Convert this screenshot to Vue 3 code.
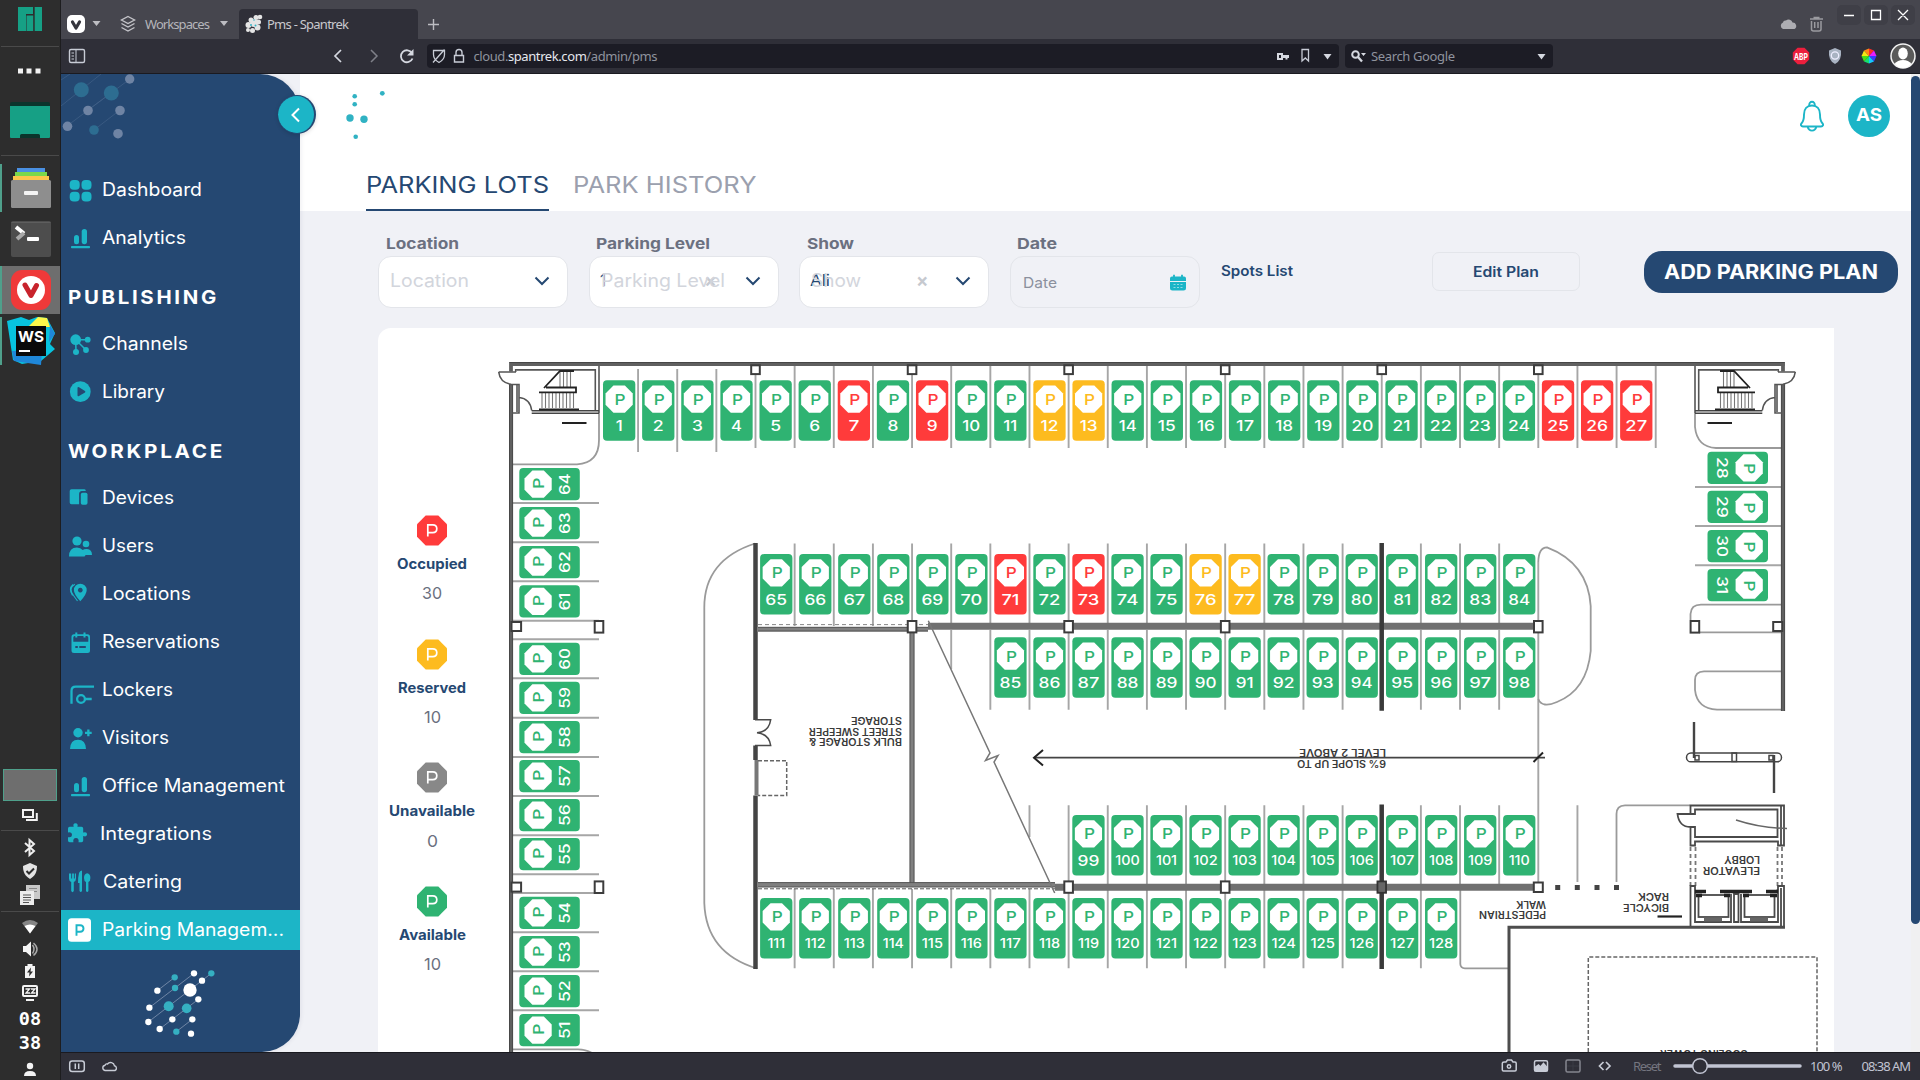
<script setup>
import { h } from 'vue'

// Single line of text fitted to a given width; the box is centred on the capitals.
const FitText = (props) => {
  const size = Number(props.size || 18)
  const height = size * 1.2
  return h('svg', { width: props.w, height, class: 'fit', style: { overflow: 'visible', flex: 'none', display: 'block' } }, [
    h('text', {
      x: 0,
      y: height / 2 + size * 0.364,
      'font-size': size,
      'font-weight': props.weight || 400,
      textLength: props.w,
      lengthAdjust: 'spacingAndGlyphs',
      fill: 'currentColor',
      style: { letterSpacing: props.spacing ? props.spacing + 'px' : null },
    }, props.text),
  ])
}
FitText.props = ['text', 'w', 'size', 'weight', 'spacing']

const menu = [
  { icon: 'dashboard', text: 'Dashboard', w: 100 },
  { icon: 'chart', text: 'Analytics', w: 84 },
  { title: 'PUBLISHING', w: 151 },
  { icon: 'channels', text: 'Channels', w: 86 },
  { icon: 'library', text: 'Library', w: 63 },
  { title: 'WORKPLACE', w: 157 },
  { icon: 'devices', text: 'Devices', w: 72 },
  { icon: 'users', text: 'Users', w: 52 },
  { icon: 'locations', text: 'Locations', w: 89 },
  { icon: 'reservations', text: 'Reservations', w: 118 },
  { icon: 'lockers', text: 'Lockers', w: 71 },
  { icon: 'visitors', text: 'Visitors', w: 67 },
  { icon: 'chart', text: 'Office Management', w: 183 },
  { icon: 'integrations', text: 'Integrations', w: 112, shift: -2 },
  { icon: 'catering', text: 'Catering', w: 79, shift: 1 },
  { icon: 'parking', text: 'Parking Managem...', w: 182, active: true },
]

const legend = [
  { text: 'Occupied', w: 70, n: '30', nw: 20, color: '#ff3b3b' },
  { text: 'Reserved', w: 68, n: '10', nw: 17, color: '#fdbb1f' },
  { text: 'Unavailable', w: 86, n: '0', nw: 11, color: '#888888' },
  { text: 'Available', w: 67, n: '10', nw: 17, color: '#2fb372' },
]

const GREEN = '#2fb372'
const colors = {}
;[7, 9, 25, 26, 27, 71, 73].forEach((n) => (colors[n] = '#ff3b3b'))
;[12, 13, 76, 77].forEach((n) => (colors[n] = '#fdbb1f'))

const spots = []
function addSpot(n, transform) {
  const s = String(n)
  const small = s.length > 2
  const w = [...s].reduce((a, c) => a + (c === '1' ? (small ? 5.9 : 7) : small ? 9.3 : 10.9), 0)
  spots.push({ n, s, w, size: small ? 12.8 : 14.4, color: colors[n] || GREEN, transform })
}
const row = (from, to, x, y, pitch = 39.03) => {
  for (let n = from; n <= to; n++) addSpot(n, `translate(${x + (n - from) * pitch} ${y})`)
}
row(1, 27, 603, 380.3, 39.12)
row(65, 80, 760.1, 554)
row(81, 84, 1386, 554)
row(85, 94, 994.3, 637.3)
row(95, 98, 1386, 637.3)
row(99, 106, 1072.3, 815)
row(107, 110, 1386, 815)
row(111, 126, 760.1, 898)
row(127, 128, 1386, 898)
const leftTops = { 64: 468, 63: 507, 62: 546, 61: 585.3, 60: 642.7, 59: 681.7, 58: 721, 57: 760, 56: 799, 55: 838, 54: 896.7, 53: 936, 52: 975, 51: 1014 }
Object.entries(leftTops).forEach(([n, y]) => addSpot(n, `translate(519.3 ${y + 32.3}) rotate(-90)`))
const rightTops = { 28: 451.7, 29: 490.8, 30: 530, 31: 569 }
Object.entries(rightTops).forEach(([n, y]) => addSpot(n, `translate(1768 ${y}) rotate(90)`))

// Bay dividers share one column grid.
const grid = (k) => 755.5 + 39.14 * k
let bays = ''
for (let k = -3; k <= -1; k++) bays += `M${grid(k)} 369V452`
for (let k = 0; k <= 23; k++) bays += `M${grid(k)} 366V448`
for (let k = 1; k <= 19; k++) if (k !== 16) bays += `M${grid(k)} 543.5V626`
for (let k = 6; k <= 19; k++) if (k !== 16) bays += `M${grid(k)} 630V709.7`
for (let k = 8; k <= 19; k++) if (k !== 16) bays += `M${grid(k)} 805.3V886`
for (let k = 1; k <= 17; k++) if (k !== 16) bays += `M${grid(k)} 889V968.3`
bays += `M${grid(5)} 630V669M${grid(7)} 805.3V837M${grid(21)} 805.3V882M${grid(20)} 562V882`
const leftLines = [503, 542.3, 581.3, 620.7, 639.3, 678.3, 717.7, 757, 796, 835.3, 874.3, 893, 932.3, 971.3, 1010.3]
leftLines.forEach((y) => (bays += `M512 ${y}H599`))
;[487, 526, 565.3].forEach((y) => (bays += `M1695 ${y}H1781`))

const columns = [
  ...[0, 4, 8, 12, 16, 20].map((k) => [grid(k) - 4.3, 365.3, 8.6, 8.8]),
  ...[4, 8, 12, 20].map((k) => [grid(k) - 4.3, 621, 8.6, 11.4]),
  ...[8, 12].map((k) => [grid(k) - 4.3, 881.4, 8.6, 11.4]),
  [grid(20) - 4.5, 882.5, 9, 9.5],
  [511.5, 622, 9.6, 9], [594.7, 621, 8.6, 11.6],
  [511.5, 882.6, 9.6, 9], [594.7, 881.4, 8.6, 11.6],
  [1690.6, 621, 8.6, 11.6], [1773.2, 622, 9, 9],
]

const notes = [
  ['BULK STORAGE &', 902, 741.7, 93], ['STREET SWEEPER', 902, 731, 93], ['STORAGE', 902, 720, 51],
  ['6% SLOPE UP TO', 1386, 763.5, 89], ['LEVEL 2 ABOVE', 1386, 752.3, 87],
  ['PEDESTRIAN', 1546, 914.8, 67], ['WALK', 1546, 904, 30],
  ['BICYCLE', 1669, 907, 46], ['RACK', 1669, 896, 31],
  ['ELEVATOR', 1760, 870, 57], ['LOBBY', 1760, 859.3, 36],
  ['COOLING TOWER', 1748, 1053.5, 88],
]
const oct = (cx, cy, r) => {
  const a = r * 0.42
  return [[-a, -r], [a, -r], [r, -a], [r, a], [a, r], [-a, r], [-r, a], [-r, -a]].map(([x, y]) => `${cx + x},${cy + y}`).join(' ')
}
</script>

<template>
  <div class="screen">
    <!-- Desktop dock -->
    <aside class="dock">
      <div class="dock-part">
        <svg width="60" height="47" viewBox="0 0 60 47"><path fill="#16a085" d="M18 7h15v7h-7v17h-8zM26.5 15.5h6.7V31h-6.7zM34.7 7H42v24h-7.3z" /><path d="M1 46.5h58" stroke="#4a4a4a" /></svg>
        <svg width="60" height="109" viewBox="0 47 60 109">
          <path fill="#f2f2f2" d="M18 68.500h5v5h-5zM26.500 68.500h5v5h-5zM35.500 68.500h5v5h-5z" />
          <rect x="10" y="102" width="40" height="36" rx="2" fill="#0b352c" /><path fill="#16a085" d="M10 106h40v31a1 1 0 0 1-1 1h-9v-2.500a1.500 1.500 0 0 0-1.500-1.500h-17a1.500 1.500 0 0 0-1.500 1.500v2.500h-9a1 1 0 0 1-1-1z" />
          <path d="M1 155.500h58" stroke="#4a4a4a" />
        </svg>
        <svg width="60" height="56" viewBox="0 160 60 56">
          <path fill="#4fa08b" d="M0 164h2v48H0z" />
          <path fill="#4a90e2" d="M17 168h28v5H17z" /><path fill="#7bd84b" d="M15 172h32v5H15z" /><path fill="#fdc64b" d="M13 176h36v5H13z" />
          <rect x="11" y="180" width="40" height="28" rx="1.500" fill="#8e8e8e" /><rect x="24" y="191" width="14" height="4" rx="1" fill="#f4f4f4" />
        </svg>
        <svg width="60" height="50" viewBox="0 216 60 50">
          <rect x="11" y="221" width="40" height="36" rx="2" fill="#4d4d4d" /><path d="M11.500 222.500h39" stroke="#5e5e5e" />
          <path d="M16 227l8 6.500" stroke="#fff" stroke-width="4" /><path d="M24 233l-7 6" stroke="#a8a8a8" stroke-width="4" /><rect x="27" y="237" width="12" height="4" rx="1" fill="#fff" />
        </svg>
        <svg width="60" height="48" viewBox="0 266 60 48">
          <path fill="#6e6e6e" d="M0 266h60v48H0z" /><path fill="#4fa08b" d="M0 266h2v48H0z" />
          <rect x="11" y="270" width="40" height="40" rx="11" fill="#ef3939" /><circle cx="31" cy="290" r="14" fill="#fff" />
          <path d="M25 285l6 10.500 5.500-10" fill="none" stroke="#c8232c" stroke-width="5" stroke-linecap="round" stroke-linejoin="round" />
        </svg>
        <svg width="60" height="52" viewBox="0 314 60 52">
          <path fill="#4fa08b" d="M0 317h2v48H0z" />
          <path fill="#07c3de" d="M7 321l14-4 8 3 8-3 10 1 8 15-5 11 5 5-14 12-19 3-9-4z" /><path fill="#fcf84a" d="M28 327l10-10 9 1 3 9z" /><path fill="#1f87d8" d="M50 325l5 9-6 8zM12 351l30 0-1 14-27-4z" />
          <rect x="16" y="326" width="30" height="30" fill="#0a0a0a" /><text x="18" y="342" font-size="15" font-weight="700" fill="#fff" textLength="26" lengthAdjust="spacingAndGlyphs">WS</text><path fill="#fff" d="M19 350h11v2H19z" />
        </svg>
      </div>
      <div class="dock-part">
        <svg width="60" height="66" viewBox="0 765 60 66">
          <rect x="3.500" y="769.500" width="53" height="31" fill="#6e6e6e" stroke="#4fa08b" /><path d="M23 810h10v7H23zM36.800 813v7H26" fill="none" stroke="#f2f2f2" stroke-width="2" /><path d="M1 830.500h58" stroke="#4a4a4a" />
        </svg>
        <svg width="60" height="81" viewBox="0 831 60 81">
          <path d="M25 843l9 8-4.500 4v-15l4.500 4-9 8" fill="none" stroke="#eee" stroke-width="2" />
          <path d="M30 863l7 3c0 6-2 10-7 13-5-3-7-7-7-13z" fill="#e4e4e4" /><path d="M26.500 871l2.500 2.500 5-5" fill="none" stroke="#2d2d2d" stroke-width="2" />
          <path fill="#c9c9c9" d="M26 885h14v14H26z" /><path d="M29 888.500h8M29 891.500h8" stroke="#888" /><path fill="#ececec" d="M20 891h14v14H20z" /><path d="M23 895h8M23 897.500h8M23 900h8M23 902.500h6" stroke="#555" /><path d="M1 911.500h58" stroke="#4a4a4a" />
        </svg>
        <svg width="60" height="92" viewBox="0 912 60 92">
          <path d="M22 923q8-6 16 0l-8 10.500z" fill="#858585" /><path d="M24.500 926q5.500-3 11 0l-5.500 7.500z" fill="#fff" />
          <path fill="#f4f4f4" d="M23 946h3l5-4.500v15l-5-4.500h-3z" /><path d="M32.500 945q3 4 0 8.500M33.500 943q7 6 0 12.500" fill="none" stroke="#aaa" stroke-width="1.500" />
          <path fill="#f4f4f4" d="M25 966h2.500v-2h5v2H35v12H25z" /><path fill="#2d2d2d" d="M31 967.500l-4 5h2.500l-.5 4 4-5h-2.500z" />
          <rect x="23" y="986" width="14" height="10" rx="1" fill="none" stroke="#f4f4f4" stroke-width="2" /><path d="M25.500 989h4l-3.500 4h4M31 989h4l-3.500 4h4" fill="none" stroke="#f4f4f4" stroke-width="1.300" /><path fill="#f4f4f4" d="M26 999h8v2h-8z" />
        </svg>
        <div class="clock">08</div>
        <div class="clock">38</div>
        <svg width="60" height="25" viewBox="0 1055 60 25"><circle cx="30" cy="1066" r="3.200" fill="#f4f4f4" /><path fill="#f4f4f4" d="M24 1076q0-5 6-5t6 5z" /></svg>
      </div>
    </aside>

    <div class="browser">
      <!-- Tab strip -->
      <div class="tabbar">
        <div class="tb-left">
          <svg width="178" height="39" viewBox="61 0 178 39">
            <rect x="67" y="15" width="18" height="18" rx="5" fill="#fff" /><path d="M72.500 22l3.500 6 3.500-6" fill="none" stroke="#35353d" stroke-width="3.200" stroke-linecap="round" stroke-linejoin="round" />
            <path fill="#bdbdc2" d="M92.500 21h8l-4 5zM220 21h8l-4 5z" />
            <path d="M128 16.500l6.500 3.500-6.500 3.500-6.500-3.500zM121.500 23.500l6.500 3.500 6.500-3.500M121.500 27.500l6.500 3.500 6.500-3.500" fill="none" stroke="#c4c4c9" stroke-width="1.400" />
            <text class="ui" x="145" y="28.500" textLength="65" fill="#b5b5ba">Workspaces</text>
          </svg>
        </div>
        <div class="tab">
          <svg width="179" height="30" viewBox="239 9 179 30">
            <g fill="#e5e5e5"><circle cx="251" cy="20" r="2.500" /><circle cx="256" cy="17.500" r="2.500" /><circle cx="260" cy="17" r="2.300" /><circle cx="254" cy="23" r="4" /><circle cx="248.500" cy="25" r="3" /><circle cx="258.500" cy="22" r="2.500" /><circle cx="248" cy="30" r="2" /><circle cx="252.500" cy="30.500" r="2.500" /><circle cx="257.500" cy="27.500" r="3" /></g><g fill="#35b5c6"><circle cx="251" cy="25" r="1" /><circle cx="255.500" cy="25.500" r="1" /><circle cx="254" cy="20" r=".8" /></g>
            <text class="ui" x="267" y="28.500" textLength="82" fill="#c9c9ce">Pms - Spantrek</text>
          </svg>
        </div>
        <svg width="34" height="39" viewBox="418 0 34 39"><path d="M428 24.500h11M433.500 19v11" stroke="#bdbdc2" stroke-width="1.400" /></svg>
        <svg class="push" width="150" height="39" viewBox="1770 0 150 39">
          <path fill="#adadb2" d="M1783 29a3.500 3.500 0 0 1 0-6.500 2.500 2.500 0 0 1 3-2 4 4 0 0 1 6.500 2 3.500 3.500 0 0 1 2 6.500z" />
          <path d="M1810 19h13M1813.500 17.500h6M1811.500 21v8q0 2 2 2h5.500q2 0 2-2v-8M1814.700 22v6M1818 22v6" fill="none" stroke="#9b9ba0" stroke-width="1.500" />
          <g fill="#3f3f47"><rect x="1837" y="5" width="24" height="20" rx="5" /><rect x="1864" y="5" width="24" height="20" rx="5" /><rect x="1891" y="5" width="24" height="20" rx="5" /></g>
          <path d="M1844 15.500h10M1871.500 10.500h9v9h-9zM1898 10l10 10M1908 10l-10 10" fill="none" stroke="#fff" stroke-width="1.300" />
        </svg>
      </div>

      <!-- Address bar -->
      <div class="toolbar">
        <svg width="366" height="34" viewBox="61 39 366 34">
          <rect x="69.500" y="49.500" width="15" height="13" rx="1.500" fill="none" stroke="#c8ccd6" stroke-width="1.400" /><path d="M76 50v12M71.500 53h2.500M71.500 56h2.500M71.500 59h2.500" stroke="#c8ccd6" />
          <path d="M341 50l-6 6 6 6" fill="none" stroke="#d5d8e0" stroke-width="1.700" /><path d="M371 50l6 6-6 6" fill="none" stroke="#7f8089" stroke-width="1.500" /><path d="M412 53a6 6 0 1 0 .5 5.500" fill="none" stroke="#d5d8e0" stroke-width="1.800" /><path fill="#d5d8e0" d="M413.500 49v6.500H407z" />
        </svg>
        <div class="field url">
          <svg width="45" height="24" viewBox="427 44 45 24"><path d="M433.500 50.500h11v4q0 5-5.500 8-5.500-3-5.500-8zM433 62.500l11.500-13" fill="none" stroke="#c8ccd6" stroke-width="1.300" /><path d="M454.500 55.500h9v6.500h-9zM456 55v-2.500q0-3 3-3t3 3V55" fill="none" stroke="#c8ccd6" stroke-width="1.400" /></svg>
          <svg width="190" height="24" viewBox="472 44 190 24"><text class="ui" x="473.500" y="60.500" textLength="184" fill="#8f939d">cloud.<tspan fill="#e6e8ee">spantrek.com</tspan>/admin/pms</text></svg>
          <svg class="push" width="69" height="24" viewBox="1270 44 69 24"><path fill="#d5d8e0" fill-rule="evenodd" d="M1277 53h6v2h6v3h-1.500v1.500h-2V58H1283v2h-6zm2 2v3h2v-3z" /><path d="M1302 49.500h6.500V61l-3.200-3-3.300 3z" fill="none" stroke="#c8ccd6" stroke-width="1.300" /><path fill="#d5d8e0" d="M1323.500 54h8l-4 5.500z" /></svg>
        </div>
        <div class="field search">
          <svg width="208" height="24" viewBox="1345 44 208 24"><circle cx="1355.500" cy="54.500" r="3.300" fill="none" stroke="#d5d8e0" stroke-width="2" /><path d="M1358 57l4 4.500" stroke="#d5d8e0" stroke-width="2.300" /><path fill="#d5d8e0" d="M1361 53h5l-2.500 3zM1537.500 54h8l-4 5.500z" /><text class="ui" x="1371" y="60.500" textLength="84" fill="#8f939d">Search Google</text></svg>
        </div>
        <svg class="push" width="140" height="34" viewBox="1780 39 140 34">
          <polygon :points="oct(1801, 56, 8.200)" fill="#ec1f3d" /><text x="1794" y="59.500" font-size="9.500" font-weight="700" fill="#fff" textLength="14" lengthAdjust="spacingAndGlyphs">ABP</text>
          <path d="M1835 48l6 2.500q1 10-6 13.500-7-3.500-6-13.500z" fill="#a9b3c2" /><circle cx="1835" cy="55.500" r="3.700" fill="none" stroke="#eef" stroke-width="1.300" />
          <path fill="#ff2a2a" d="M1869 56v-7.500l5 2z" /><path fill="#e51fff" d="M1869 56l5-5.500 2.500 5.500z" /><path fill="#3a3aff" d="M1869 56h7.500l-2.500 5.500z" /><path fill="#16c8ff" d="M1869 56l5 5.500-5 2z" /><path fill="#14e070" d="M1869 56v7.500l-5-2z" /><path fill="#4be014" d="M1869 56l-5 5.500-2.500-5.500z" /><path fill="#f5e614" d="M1869 56h-7.500l2.500-5.500z" /><path fill="#ff8a14" d="M1869 56l-5-5.500 5-2z" />
          <circle cx="1903" cy="56" r="12" fill="#5a5a5a" stroke="#f2f2f2" stroke-width="1.500" /><ellipse cx="1903" cy="53.500" rx="4.800" ry="6" fill="#fff" /><path fill="#fff" d="M1894.500 64q3-4 8.500-4t8.500 4q-3.500 4-8.500 4t-8.500-4z" />
        </svg>
      </div>

      <!-- Web page -->
      <div class="page">
        <nav class="side">
          <svg class="side-top" width="239" height="91" viewBox="61 74 239 91">
            <g stroke="#4f6d92" stroke-width=".7" opacity=".7"><path d="M61 80l9-6M61 106l40-32M88 110l42-31M67 126l44-33M94 130l26-20" /></g>
            <g fill="#2d6d91"><circle cx="81.300" cy="89.700" r="7.500" /><circle cx="111.300" cy="93" r="7.500" /><circle cx="94" cy="130" r="4.800" /></g>
            <g fill="#6f84a4"><circle cx="129.700" cy="79" r="4.700" /><circle cx="88" cy="110.500" r="4.800" /><circle cx="120" cy="110.500" r="4.800" /><circle cx="67.500" cy="126.300" r="4.800" /><circle cx="118" cy="133.700" r="4.800" /></g>
          </svg>
          <template v-for="m in menu" :key="m.text || m.title">
            <div v-if="m.title" class="title"><FitText :text="m.title" :w="m.w" size="19" weight="700" spacing="2.500" /></div>
            <div v-else class="item">
              <div class="item-in" :class="{ active: m.active }">
                <svg class="ico" width="26" height="26" viewBox="0 0 26 26">
                  <g v-if="m.icon === 'dashboard'"><rect x="2.700" y="3" width="10" height="9.800" rx="4" /><rect x="14.500" y="3" width="10" height="9.800" rx="4" /><rect x="2.700" y="14.700" width="10" height="9.800" rx="4" /><rect x="14.500" y="14.700" width="10" height="9.800" rx="4" /></g>
                  <g v-else-if="m.icon === 'chart'"><rect x="7" y="10" width="5" height="9.200" rx="2.500" /><rect x="14.700" y="4" width="5.300" height="15.200" rx="2.600" /><rect x="4" y="21" width="19" height="2.200" rx=".8" /></g>
                  <g v-else-if="m.icon === 'channels'"><path class="ln" d="M8.700 8.700h12M8.700 8.700L19 19M8.700 8.700L9 21" /><circle cx="8.700" cy="8.700" r="5.400" /><circle cx="20.700" cy="8.700" r="2.900" /><circle cx="19" cy="19" r="2.900" /><circle cx="9" cy="21" r="3" /></g>
                  <g v-else-if="m.icon === 'library'"><circle cx="13.300" cy="12.700" r="10.400" /><path fill="#254872" d="M10.500 9q0-1.500 1.500-.8l6 3.700q.8.800 0 1.500l-6 3.700q-1.500.7-1.500-.8z" /></g>
                  <g v-else-if="m.icon === 'devices'"><path d="M4.500 4.300h13q1.300 0 1.300 1.700h-4q-2.700.4-2.700 3v10.300H4.500q-1.800 0-1.800-1.800V6q0-1.700 1.800-1.700z" /><rect x="13.800" y="7.700" width="6.700" height="12" rx="1.800" /></g>
                  <g v-else-if="m.icon === 'users'"><circle cx="10" cy="8" r="4.600" /><circle cx="19" cy="11" r="3.300" /><path d="M2 23.600q0-9 8-9 3.500 0 5.700 2.500 2-1.300 4.300-1 5 .6 5 6h-6.500q-.3 1.500-1.500 1.500z" /></g>
                  <g v-else-if="m.icon === 'locations'"><path fill-rule="evenodd" d="M13.300 2.700a6.400 6.400 0 0 1 6.400 6.500q0 4-6.400 11-6.400-7-6.400-11a6.400 6.400 0 0 1 6.400-6.500zm0 4a2.400 2.400 0 1 0 .01 0z" /><path d="M7.800 3.300Q1 7.500 6.500 14.500l4 5.500M6 3.500q-5 4.500-.5 11" fill="none" stroke="#1cb5c7" stroke-width="1.100" /></g>
                  <g v-else-if="m.icon === 'reservations'"><path fill-rule="evenodd" d="M7 5.200h13.500q2.500 0 2.500 2.500v13.800q0 2.500-2.500 2.500H7q-2.500 0-2.500-2.500V7.700q0-2.500 2.500-2.500zM6.300 12.700h15V8.500q0-1.500-1.500-1.500H7.800q-1.500 0-1.500 1.500zM8.300 17v2h2.500v-2zm4 0v2h6.500v-2z" /><path class="ln" style="stroke-width: 2" d="M9.300 3.500v5M17.500 3.500v5" /></g>
                  <g v-else-if="m.icon === 'lockers'" class="thick"><path d="M4.500 26.700V14q0-4.300 4.300-4.300H27M18 22h6.700" /><circle cx="14" cy="22" r="3.900" /></g>
                  <g v-else-if="m.icon === 'visitors'"><circle cx="11" cy="7.700" r="4.700" /><path d="M3 24q.3-9.300 8-9.300T19 24zM20.200 4.500h2.300v2.200h2.200V9h-2.200v2.200h-2.300V9H18V6.700h2.200z" /></g>
                  <g v-else-if="m.icon === 'integrations'"><path d="M1 7.500q0-1.700 1.700-1.700h4Q5.500 2.300 8.500 2.200q3 .1 1.900 3.600h4.100q1.700 0 1.700 1.700v4.100q3.800-1.200 3.900 1.700-.1 3-3.900 1.800v4.400q0 1.700-1.700 1.700h-3q.8-4.200-2.500-4.300-3.400.1-2.600 4.300H2.700Q1 21.200 1 19.500v-3.300q3.900.7 4-2.200-.1-3.200-4-2.500z" /></g>
                  <g v-else-if="m.icon === 'catering'"><path d="M2 4.500v5.300q0 2.500 2.200 3.200V22q1.300 2.300 2.600 0v-9Q9 12.300 9 9.800V4.500H7.800v5H6.900v-5H5.100v5h-.9v-5zM12 4q.8-2.500 3-2.500V22q-1.300 2-2.500 0v-8H11q0-6 1-10zM20.200 4.200q3.200.5 3.200 4.700 0 3-2 4.200V22q-1.200 2-2.400 0v-8.900q-2-1.200-2-4.200 0-4.200 3.200-4.700z" /></g>
                  <g v-else><rect x="1" y="1.300" width="23" height="23.500" rx="3.500" fill="#fff" /><path fill="none" stroke="#1cb5c7" stroke-width="1.900" d="M9.500 18.800V8.200h3.600q3.400.1 3.400 3.300t-3.400 3.300H9.500" /></g>
                </svg>
                <FitText :text="m.text" :w="m.w" size="18" weight="420" :style="{ marginLeft: (m.shift || 0) + 'px' }" />
              </div>
            </div>
          </template>
          <svg class="side-logo" width="76.700" height="73.300" viewBox="430 680 230 220">
            <g stroke="#6f86a5" stroke-width="3"><path d="M473 751l52-40M449 802l134-103M446 845l189-146M480 866l116-89M530 874l48-37" /></g>
            <g fill="#fff"><circle cx="571" cy="749" r="20" /><circle v-for="p in [[583,699],[607,721],[473,751],[449,802],[596,777],[446,845],[518,837],[578,837],[480,866],[574,880]]" :key="p[0]" :cx="p[0]" :cy="p[1]" r="9.500" /></g>
            <g fill="#35b0c2"><circle cx="507" cy="798" r="15" /><circle cx="561" cy="804" r="14.500" /><circle v-for="p in [[525,711],[526,743],[635,699],[530,874]]" :key="p[0]" :cx="p[0]" :cy="p[1]" r="9.500" /></g>
          </svg>
          <button class="toggle"><svg width="12" height="16" viewBox="0 0 12 16"><path d="M9 1.500L2.500 8 9 14.500" fill="none" stroke="#fff" stroke-width="2" /></svg></button>
        </nav>

        <main class="main">
          <header class="head">
            <div class="head-top">
              <svg width="50" height="84" viewBox="345 74 50 84"><g fill="#30b2c3"><circle cx="354.700" cy="96.300" r="2.300" /><circle cx="354.700" cy="104.300" r="2.300" /><circle cx="382.300" cy="93.300" r="2.400" /><circle cx="350" cy="118" r="3.700" /><circle cx="364" cy="119.300" r="3.700" /><circle cx="355.700" cy="136.700" r="2.300" /></g></svg>
              <svg class="push bell" width="24" height="32" viewBox="0 0 24 32"><path d="M12 5.500c5 0 8 3.500 8 9 0 6 .7 7 2.200 8.500 1.700 1.800.7 3.500-1.200 3.500H3c-1.900 0-2.900-1.700-1.200-3.500C3.300 21.500 4 20.500 4 14.500c0-5.500 3-9 8-9zM9.300 6c-.8-5.700 6.200-5.700 5.400 0M7.500 26.500c1.500 5.500 7.500 5.500 9 0" fill="none" stroke="#1cb5c7" stroke-width="1.900" /></svg>
              <div class="avatar"><FitText text="AS" w="26" size="18" weight="700" /></div>
            </div>
            <div class="tabs">
              <div class="ptab on"><FitText text="PARKING LOTS" w="183" size="22.500" /></div>
              <div class="ptab"><FitText text="PARK HISTORY" w="183.500" size="22.500" /></div>
            </div>
          </header>

          <div class="filters">
            <div class="group"><FitText class="lbl" text="Location" w="73" size="15" weight="650" />
              <div class="box"><FitText class="ph" text="Location" w="79" size="18" /><svg class="chev" width="16" height="10" viewBox="0 0 16 10"><path d="M1.500 1.500L8 8l6.500-6.500" /></svg></div></div>
            <div class="group"><FitText class="lbl" text="Parking Level" w="114" size="15" weight="650" />
              <div class="box"><FitText class="val" text="1" w="6" size="16" /><FitText class="ph" text="Parking Level" w="124" size="18" /><span class="x over">×</span><svg class="chev" width="16" height="10" viewBox="0 0 16 10"><path d="M1.500 1.500L8 8l6.500-6.500" /></svg></div></div>
            <div class="group"><FitText class="lbl" text="Show" w="47" size="15" weight="650" />
              <div class="box"><FitText class="val" text="Ali" w="20" size="16" /><FitText class="ph" text="Show" w="50" size="18" /><span class="x">×</span><svg class="chev" width="16" height="10" viewBox="0 0 16 10"><path d="M1.500 1.500L8 8l6.500-6.500" /></svg></div></div>
            <div class="group"><FitText class="lbl" text="Date" w="40" size="15" weight="650" />
              <div class="box date"><FitText text="Date" w="34" size="14.500" /><svg class="cal" width="18" height="18" viewBox="0 0 18 18"><path fill="#1cb5c7" d="M3 2.500h12q2 0 2 2V7H1V4.500q0-2 2-2zM1 8h16v6q0 2.500-2.500 2.500h-11Q1 16.500 1 14z" /><path d="M5 .8v4M13 .8v4" stroke="#1cb5c7" stroke-width="1.800" /><path d="M4.500 10.500h2M8 10.500h2M11.500 10.500h2M4.500 13.500h2M8 13.500h2M11.500 13.500h2" stroke="#8fdbe4" stroke-width="1.100" /></svg></div></div>
            <div class="spots"><FitText text="Spots List" w="72" size="14" weight="620" /></div>
            <button class="edit"><FitText text="Edit Plan" w="66" size="14" weight="620" /></button>
            <button class="add"><FitText text="ADD PARKING PLAN" w="214" size="19.500" weight="680" /></button>
          </div>

          <section class="card">
            <div class="legend">
              <div v-for="l in legend" :key="l.text" class="leg">
                <svg width="30" height="31" viewBox="0 0 30 31"><polygon :points="oct(15, 15.500, 15)" :fill="l.color" /><path fill="none" stroke="#fff" stroke-width="1.700" d="M10.800 21.500V9.800h5q4 .1 4 3.900t-4 3.900h-5" /></svg>
                <FitText class="name" :text="l.text" :w="l.w" size="14" weight="680" />
                <FitText class="num" :text="l.n" :w="l.nw" size="16" />
              </div>
            </div>

            <svg class="plan" width="1348" height="724" viewBox="486 328 1348 724">
              <defs>
                <g id="stairwell">
                  <path d="M515.700 372v-2.200H596M517 370H595.300V410.500M599 366V413M512 413H519V384.500H510M517 384.500V412M498.700 372H516M498.700 372Q500 382.500 511 384.300M519 397.500V412M519 397.500Q530 398.500 531.700 410.500" fill="none" stroke="#555" stroke-width="1.600" />
                  <path d="M531.700 410.800H599M531.700 413.300H599" stroke="#444" stroke-width="1.600" />
                  <path d="M542 393V408M545.500 393V408M549 393V408M552.500 393V408M556 393V408M559.500 393V408M563 393V408M566.500 393V408M570 393V408M573.500 393V408M560 371V387M563.500 371V387M567 371V387M570.500 371V387" stroke="#777" stroke-width="1.100" />
                  <path d="M544 388L560 371H574M539 392.300H576V387.500H546M539 409.500H579" fill="none" stroke="#222" stroke-width="1.800" />
                  <path d="M562 423H586.500" stroke="#222" stroke-width="2.200" />
                </g>
                <g id="stall-face"><polygon :points="oct(16.150, 18.800, 13.600)" fill="#fff" /></g>
              </defs>

              <path :d="bays" fill="none" stroke="#a6a6a6" stroke-width="1.900" />
              <g fill="none" stroke="#9a9a9a" stroke-width="1.800">
                <path d="M512 464.300H577Q599 463 599 440V413M512 1049.300H578Q586 1049.500 592 1053" />
                <path d="M1695 413V427Q1697 447 1716 448H1781" />
                <path d="M1690.500 620V614Q1691 604.700 1701 604.700H1781M1699 632.400H1781M1781 671.300H1704Q1695 671.500 1695 680V690Q1697 708.500 1717 709.700H1781" />
                <path d="M755 543.500Q704 560 704.300 608V903Q706 953 757 968.500" />
                <path d="M1538.300 562Q1538.500 547.500 1547 547.300Q1588 563 1590.700 606V651Q1587 690 1557 702Q1542 708.500 1538.300 699" />
                <path d="M1460.300 889V964Q1460.500 968.300 1465 968.300H1508" />
                <path d="M1690 805.300H1625Q1616.500 805.500 1616.500 814V882" />
              </g>
              <g fill="none" stroke="#606060" stroke-width="3.800">
                <path d="M509.300 364H1784.700M511 362V371.500M511 384V1052" /><path d="M1783 362V371.500M1783 384V711" />
              </g>
              <g fill="none" stroke="#444" stroke-width=".9"><path d="M509.500 384V1052M512.600 384V1052M509.500 362.500H1784.500M1781.400 384V711M1784.600 384V711" /></g>
              <use href="#stairwell" /><use href="#stairwell" transform="translate(2294 0) scale(-1 1)" />

              <g fill="none" stroke="#555" stroke-width="4.500">
                <path stroke="#444" d="M755.500 543V720M755.500 745.500V760M755.500 795.500V969" />
                <path stroke="#777" stroke-width="4" d="M756.500 760V795.500" />
                <path stroke="#808080" d="M757 629.300H928M757 884.700H1055M912 633V883" />
                <path stroke="#707070" stroke-width="7" d="M928 626.300H1534M1055 887.200H1534" />
                <path stroke="#3a3a3a" d="M1381.700 543V710.700M1381.700 804.500V969" />
              </g>
              <g fill="none" stroke="#555" stroke-width="1"><path d="M758 627.300H928M758 631H928M758 882.600H1055M758 887H1055M910 633V883M914 633V883" /><path stroke-dasharray="4 3" stroke="#888" d="M758 624.600H928" /><path stroke-dasharray="4 2" d="M758 888.800H1055" /></g>
              <g fill="none" stroke="#4a4a4a" stroke-width="1.500">
                <path d="M755 719.700H770.700Q769 732 757 732.700Q769 734 770.700 745.500H755" />
                <path stroke-dasharray="4 2" stroke="#666" d="M758 760.700H786.700V795.500H758" />
                <path stroke="#777" d="M928.300 620.700L990 753L985.500 760.500L998 755.500L994 762L1054.700 893" />
                <path d="M1034 757.700H1545" stroke="#444" stroke-width="1.700" /><path stroke="#222" stroke-width="2" d="M1043 750L1034 757.700L1043 765.500M1533.500 762L1543 752.500" />
                <path stroke-dasharray="4 2" stroke="#666" d="M1588.300 1052V957H1817V1052" />
              </g>
              <rect :x="grid(16) - 4.300" y="881.400" width="8.600" height="11.400" fill="#666" stroke="#333" stroke-width="1.800" />
              <rect v-for="(c, i) in columns" :key="i" :x="c[0]" :y="c[1]" :width="c[2]" :height="c[3]" fill="#fff" stroke="#3c3c3c" stroke-width="2" />
              <path fill="#444" d="M1555.200 885h5v5h-5zM1574.800 885h5v5h-5zM1594.500 885h5v5h-5zM1614 885h5v5h-5z" />

              <!-- gate -->
              <g fill="none" stroke="#444" stroke-width="1.500"><rect x="1686.500" y="753" width="95" height="8.800" rx="4.400" /><path d="M1695 755.500h4v4.500h-4zM1732 753h4.500v8.500h-4.500zM1769 755.500h4v4.500h-4z" /><path stroke-width="2.400" d="M1694 722V758M1774 755V793" /></g>
              <!-- elevators -->
              <g fill="none" stroke="#4a4a4a" stroke-width="1.800">
                <path d="M1690.500 814V805.500H1784V845.500H1778V841.500H1695V845.500H1690.500V827H1695V837H1777.500V809.500H1695V814H1677.500Q1679 827 1690.500 827M1781 806V845" /><path stroke="#666" stroke-width="1.500" d="M1736 820Q1760 828 1787 828.500" />
                <path stroke-dasharray="4 3" stroke="#777" d="M1690.500 847V886M1695.500 847V886M1777.500 847V892M1782 847V886" />
                <path d="M1690.500 926V886H1695V922H1731V894M1741 894V922H1778V886H1784V928M1734 894H1738.500V922H1734zM1781 888V926" />
                <rect x="1698.500" y="895" width="30" height="22" /><rect x="1744.500" y="895" width="30" height="22" />
                <path stroke="#222" stroke-width="3.500" d="M1695 891.500H1706M1720 891.500H1752M1766 891.500H1778M1696 895.500H1702M1724 895.500H1730M1743 895.500H1749M1770 895.500H1777" />
                <path stroke-width="4" stroke="#666" d="M1704 919.500H1722M1750 919.500H1768" />
                <path stroke-width="3" stroke="#4d4d4d" d="M1785 927.300H1509V1052" /><path stroke="#222" stroke-width="2.200" d="M1657.500 916.500H1682" />
              </g>

              <text v-for="n in notes" :key="n[0]" :transform="`translate(${n[1]} ${n[2]}) rotate(180)`" y="3.500" font-size="9.800" font-weight="560" fill="#3a3a3a" :textLength="n[3]" lengthAdjust="spacingAndGlyphs">{{ n[0] }}</text>

              <g v-for="s in spots" :key="s.n" :transform="s.transform">
                <rect width="32.300" height="60.500" rx="4" :fill="s.color" />
                <use href="#stall-face" />
                <text x="11.600" y="24.400" font-size="15" font-weight="480" :fill="s.color" textLength="11" lengthAdjust="spacingAndGlyphs">P</text>
                <text :x="16.150 - s.w / 2" :y="45.500 + s.size * 0.364" :font-size="s.size" font-weight="500" fill="#fff" :textLength="s.w" lengthAdjust="spacingAndGlyphs">{{ s.s }}</text>
              </g>
            </svg>
          </section>
        </main>
        <div class="scroll"><i></i></div>
      </div>

      <!-- Status bar -->
      <div class="status">
        <svg width="70" height="27" viewBox="61 1053 70 27"><rect x="69.700" y="1061" width="14.600" height="10.500" rx="2.500" fill="none" stroke="#c8ccd6" stroke-width="1.500" /><path d="M75.300 1063.500v5.500M78.700 1063.500v5.500" stroke="#c8ccd6" stroke-width="1.500" /><path d="M105 1070.500a2.700 2.700 0 0 1 0-5.300 2 2 0 0 1 2.500-1.200 4 4 0 0 1 7 1.800 2.500 2.500 0 0 1 .5 4.700z" fill="none" stroke="#c8ccd6" stroke-width="1.400" /></svg>
        <svg class="push" width="330" height="27" viewBox="1590 1053 330 27" style="overflow: visible">
          <g fill="none" stroke="#c8ccd6" stroke-width="1.500">
            <path d="M1504 1062h2l1.500-2h4l1.500 2h2q1.200 0 1.200 1.200v6.600q0 1.200-1.200 1.200h-11.500q-1.200 0-1.200-1.200v-6.600q0-1.200 1.700-1.200z" /><circle cx="1509" cy="1066.500" r="1.700" />
            <rect x="1534.500" y="1060.700" width="13" height="10.500" rx="1.500" /><path fill="#c8ccd6" d="M1535 1070.500v-3l3.500-2.500 2 2 3-3.500 3.500 4v3z" />
            <rect x="1566" y="1060" width="14" height="12" rx="1.500" stroke="#85868f" /><path stroke="#3b3c45" stroke-width="1" d="M1573 1061v10M1567 1066h12" />
            <path d="M1603.500 1062l-4 4 4 4M1606 1062l4 4-4 4" stroke-width="1.700" />
          </g>
          <text class="ui" x="1633" y="1070.500" textLength="28.500" fill="#74757f">Reset</text>
          <path d="M1675 1066H1800" stroke="#c1c4d2" stroke-width="3.500" stroke-linecap="round" /><circle cx="1700" cy="1066" r="7.300" fill="#2f2f38" stroke="#c1c4d2" stroke-width="1.500" />
          <text class="ui" x="1810" y="1070.500" textLength="32.500" fill="#c1c4d2">100 %</text><text class="ui" x="1861.500" y="1070.500" textLength="49.500" fill="#c1c4d2">08:38 AM</text>
        </svg>
      </div>
    </div>
  </div>
</template>

<style>
html, body { margin: 0; background: #2d2d2d; }
</style>

<style scoped>
* { box-sizing: border-box; }
svg { display: block; flex: none; }
button { font: inherit; padding: 0; border: 0; }
.screen { display: flex; width: 1920px; height: 1080px; overflow: hidden; font-family: Inter, "Open Sans", sans-serif; }
.dock { width: 61px; background: #2d2d2d; border-right: 1px solid #1d1d1f; display: flex; flex-direction: column; justify-content: space-between; }
.dock-part { display: flex; flex-direction: column; }
.dock-part:first-child svg:nth-child(2) { margin-bottom: 4px; }
.clock { height: 24px; font: 700 18.500px/28px "DejaVu Sans Mono", monospace; color: #fff; text-align: center; margin-top: 1px; margin-bottom: -1px; }
.clock + svg { margin-top: 3px; }
.browser { flex: 1; min-width: 0; display: flex; flex-direction: column; }
.ui { font-family: "Noto Sans", sans-serif; font-size: 13px; }
.push { margin-left: auto; }
.tabbar { height: 39px; background: #46464e; display: flex; }
.tab { background: #2f2f38; height: 30px; align-self: flex-end; border-radius: 4px 4px 0 0; }
.toolbar { height: 35px; background: #2f2f38; border-bottom: 1px solid #1a1a20; display: flex; }
.field { height: 24px; margin-top: 5px; border-radius: 4px; background: #1c1c25; display: flex; }
.url { width: 912px; }
.search { width: 208px; margin-left: 6px; }
.page { height: 978px; display: flex; background: #f0f1f6; overflow: hidden; }
.side { position: relative; z-index: 2; width: 239px; background: #254872; border-radius: 0 40px 38px 0; color: #fff; display: flex; flex-direction: column; box-shadow: 1px 0 4px rgba(30, 30, 60, .08); }
.title { height: 58px; padding: 14px 0 0 7px; display: flex; align-items: center; }
.item { height: 48px; display: flex; align-items: center; padding-top: 2px; }
.item-in { width: 239px; height: 40px; padding-left: 6px; display: flex; align-items: center; gap: 9px; }
.item-in.active { background: #1cb5c7; }
.ico { fill: #1cb5c7; overflow: visible; margin-top: -1px; }
.ln { stroke: #1cb5c7; stroke-width: 1.500; fill: none; }
.thick { stroke: #1cb5c7; stroke-width: 2.300; fill: none; }
.side-logo { margin: 14px 0 0 82px; }
.toggle { position: absolute; left: 217px; top: 21px; width: 38px; height: 39px; border-radius: 50%; background: #1cb5c7; border: solid #254872; border-width: 1px 2px 1px 0; display: flex; align-items: center; justify-content: center; padding-right: 1px; box-shadow: 0 1px 4px rgba(0, 0, 0, .15); }
.main { width: 1611px; display: flex; flex-direction: column; }
.head { height: 137px; background: #fff; }
.head-top { height: 84px; display: flex; align-items: center; padding: 0 21px 0 45px; }
.avatar { width: 42px; height: 42px; margin-left: 24px; border-radius: 50%; background: #1cb5c7; color: #fff; display: flex; align-items: center; justify-content: center; padding-bottom: 2px; }
.tabs { height: 53px; padding-left: 66px; display: flex; gap: 24px; }
.ptab { height: 53px; display: flex; align-items: center; padding-top: 2px; border-bottom: 2px solid transparent; color: #9ba0ae; }
.ptab.on { color: #254872; border-bottom-color: #254872; }
.filters { height: 117px; padding: 23.500px 0 0 78px; display: flex; align-items: flex-start; }
.group { width: 190px; margin-right: 20.600px; color: #6b7080; }
.lbl { margin-left: 7.500px; }
.box { position: relative; height: 52px; width: 190px; margin-top: 3.500px; padding-left: 11px; background: #fff; border: 1px solid #e3e5ea; border-radius: 13px; display: flex; align-items: center; padding-bottom: 2px; }
.ph { color: #d2d5dc; }
.val { position: absolute; left: 10px; color: #254872; z-index: 0; }
.box .ph { position: relative; z-index: 1; }
.x { margin-left: auto; margin-right: 27px; font: 700 21px/20px "Noto Sans", sans-serif; color: #c6c9cf; }
.x.over { position: absolute; left: 115px; margin: 0; }
.chev { margin-right: 17px; fill: none; stroke: #254872; stroke-width: 2; }
.ph + .chev, .over + .chev { margin-left: auto; }
.date { background: transparent; color: #8b909d; padding: 2px 0 0 12px; }
.cal { margin-left: auto; margin-right: 12px; }
.spots { width: 72px; margin-top: 27.500px; margin-left: 1px; color: #254872; }
.spots .fit, .edit .fit { position: relative; top: -.5px; }
.edit { width: 148px; height: 39px; margin: 17.500px 0 0 139px; border: 1px solid #e3e5ea; border-radius: 7px; background: transparent; color: #254872; display: flex; align-items: center; justify-content: center; }
.add { width: 254px; height: 42px; margin: 16.500px 0 0 64px; border-radius: 18px; background: #254872; color: #fff; display: flex; align-items: center; justify-content: center; }
.card { width: 1456px; height: 724px; margin-left: 78px; background: #fff; border-radius: 13px 0 0 0; display: flex; overflow: hidden; }
.legend { width: 108px; padding-top: 187px; color: #254872; }
.leg { height: 123.700px; display: flex; flex-direction: column; align-items: center; }
.leg .name { margin-top: 9px; }
.leg .num { margin-top: 12.500px; color: #6b7080; }
.scroll { width: 9px; background: #f0f0f1; padding-top: 2px; }
.scroll i { display: block; height: 848px; border-radius: 5px; background: #254872; }
.status { height: 28px; background: #2f2f38; border-top: 1px solid #1a1a20; display: flex; }
</style>
